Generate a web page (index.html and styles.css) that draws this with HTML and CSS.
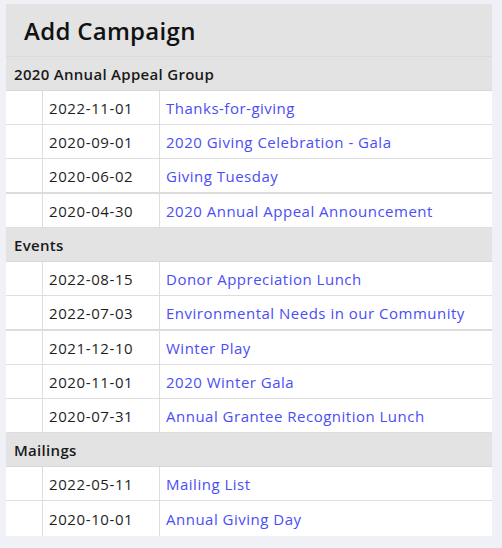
FILE: index.html
```html
<!DOCTYPE html>
<html>
<head>
<meta charset="utf-8">
<link rel="stylesheet" href="styles.css">
</head>
<body>
<div class="panel">
  <div class="title">Add Campaign</div>

  <div class="group">2020 Annual Appeal Group</div>
  <div class="row"><div class="c0"></div><div class="c1">2022-11-01</div><div class="c2"><a>Thanks-for-giving</a></div></div>
  <div class="row"><div class="c0"></div><div class="c1">2020-09-01</div><div class="c2"><a>2020 Giving Celebration - Gala</a></div></div>
  <div class="row thick"><div class="c0"></div><div class="c1">2020-06-02</div><div class="c2"><a>Giving Tuesday</a></div></div>
  <div class="row"><div class="c0"></div><div class="c1">2020-04-30</div><div class="c2"><a>2020 Annual Appeal Announcement</a></div></div>

  <div class="group">Events</div>
  <div class="row"><div class="c0"></div><div class="c1">2022-08-15</div><div class="c2"><a>Donor Appreciation Lunch</a></div></div>
  <div class="row thick"><div class="c0"></div><div class="c1">2022-07-03</div><div class="c2"><a>Environmental Needs in our Community</a></div></div>
  <div class="row"><div class="c0"></div><div class="c1">2021-12-10</div><div class="c2"><a>Winter Play</a></div></div>
  <div class="row"><div class="c0"></div><div class="c1">2020-11-01</div><div class="c2"><a>2020 Winter Gala</a></div></div>
  <div class="row"><div class="c0"></div><div class="c1">2020-07-31</div><div class="c2"><a>Annual Grantee Recognition Lunch</a></div></div>

  <div class="group">Mailings</div>
  <div class="row"><div class="c0"></div><div class="c1">2022-05-11</div><div class="c2"><a>Mailing List</a></div></div>
  <div class="row last"><div class="c0"></div><div class="c1">2020-10-01</div><div class="c2"><a>Annual Giving Day</a></div></div>
</div>
</body>
</html>
```

FILE: styles.css
```css
html, body {
  margin: 0;
  padding: 0;
  background: #f0f1f7;
}
body {
  padding: 4px 0 0 6px;
  font-family: "Open Sans", "Liberation Sans", sans-serif;
  color: #1c1c1c;
}
.panel {
  width: 486px;
  background: #ffffff;
}
.title {
  height: 52px;
  border-bottom: 1px solid #dadada;
  background: #e3e3e3;
  font-size: 24px;
  font-weight: 600;
  letter-spacing: 0.3px;
  padding-left: 18px;
  display: flex;
  align-items: center;
  color: #111;
}
.group {
  height: 33px;
  border-bottom: 1px solid #d8d8d8;
  background: #e3e3e3;
  font-size: 15px;
  font-weight: 600;
  letter-spacing: 0.3px;
  padding-left: 8px;
  display: flex;
  align-items: center;
  color: #1a1a1a;
}
.row {
  display: grid;
  grid-template-columns: 36px 117px 1fr;
  height: 33px;
  border-bottom: 1px solid #dedede;
  font-size: 15px;
}
.row.thick {
  border-bottom: 2px solid #dcdcdc;
}
.row.last {
  border-bottom: none;
  height: 35px;
}
.c1, .c2 {
  border-left: 1px solid #dedede;
  display: flex;
  align-items: center;
  padding-left: 6px;
}
.c1 {
  color: #1e1e1e;
  letter-spacing: 0.6px;
}
.c2 a {
  color: #4a4ef5;
  text-decoration: none;
  letter-spacing: 0.5px;
}
```
